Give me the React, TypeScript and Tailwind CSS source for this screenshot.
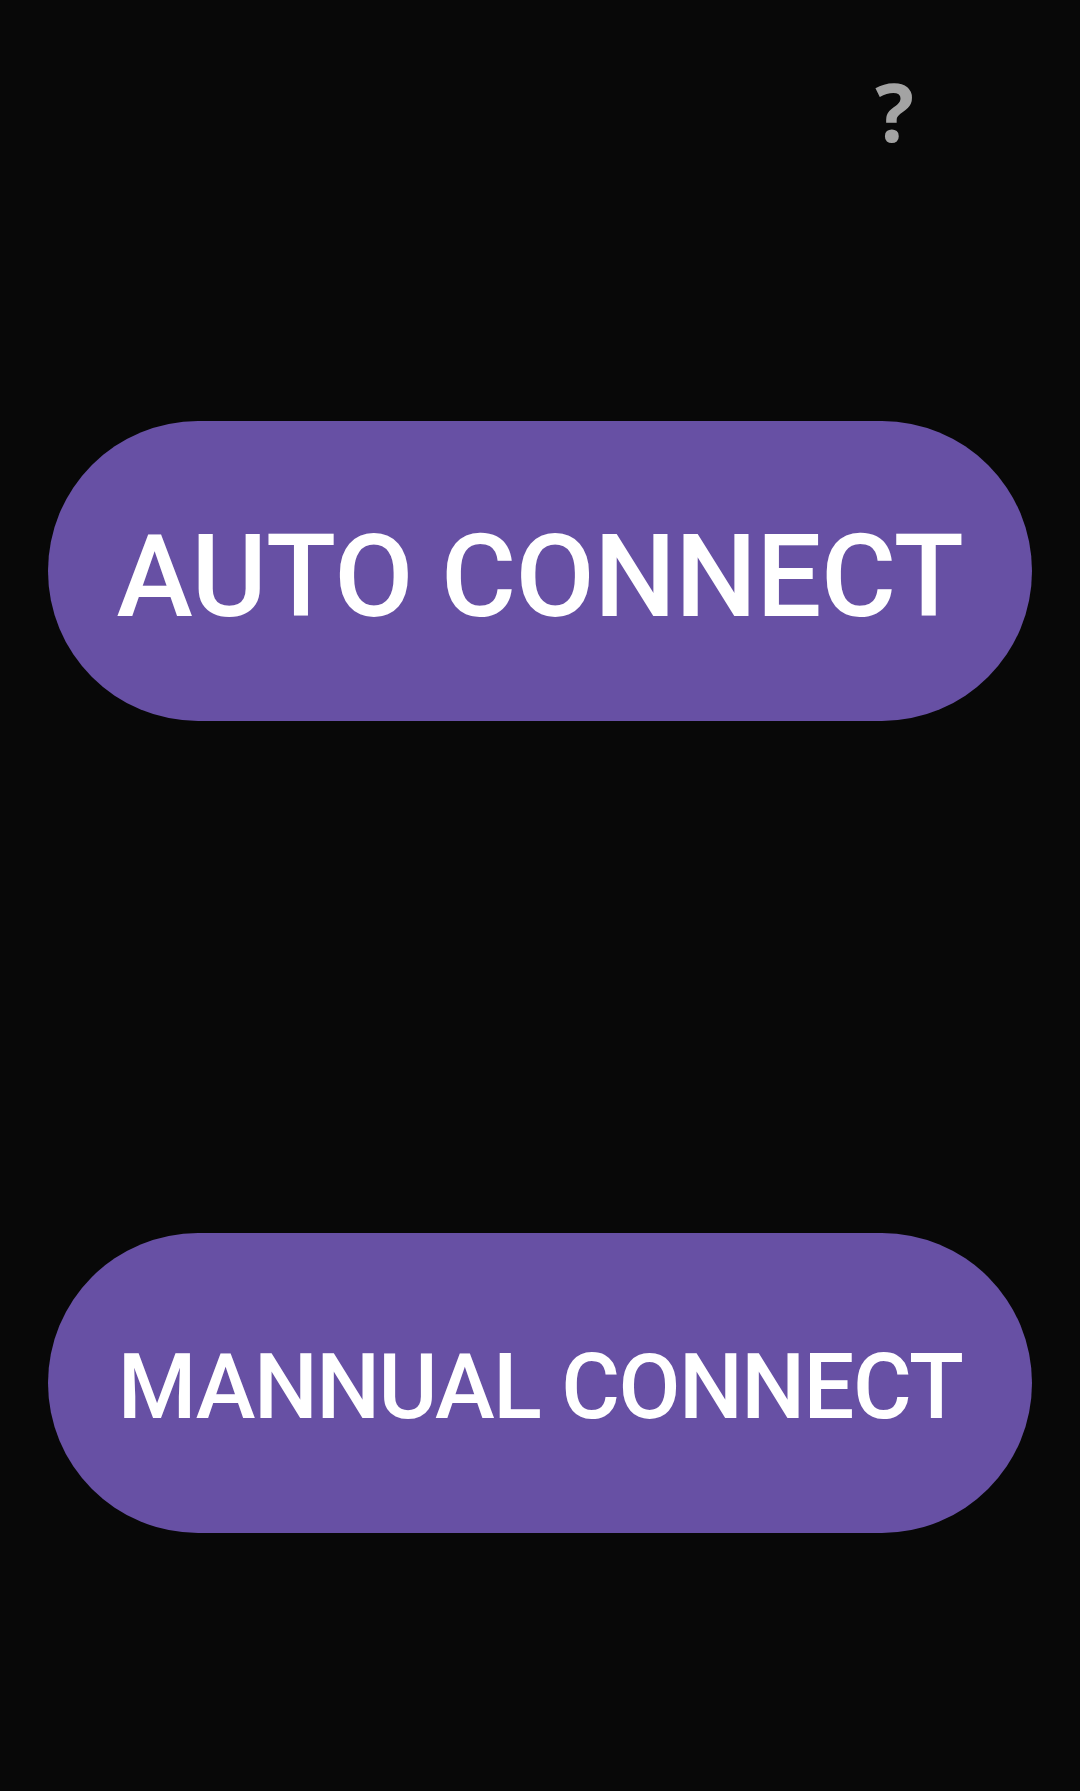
export default function App() {
  return (
    <div className="min-h-[1791px] bg-[#080808] flex flex-col px-12 font-['Roboto',sans-serif]">
      <div className="flex justify-end pr-[118px] pt-[70px]">
        <span className="text-[81px] leading-none font-bold text-[#a3a3a3] font-['Open_Sans',sans-serif]">
          ?
        </span>
      </div>

      <button className="mt-[270px] h-[300px] w-full rounded-full bg-[#6750a4] flex items-center justify-center">
        <span className="text-[115px] leading-none font-medium text-white tracking-[-0.5px] pt-[10px]">
          AUTO CONNECT
        </span>
      </button>

      <button className="mt-[512px] h-[300px] w-full rounded-full bg-[#6750a4] flex items-center justify-center">
        <span className="text-[90px] leading-none font-medium text-white tracking-[-1.5px] pt-[10px]">
          MANNUAL CONNECT
        </span>
      </button>
    </div>
  );
}
